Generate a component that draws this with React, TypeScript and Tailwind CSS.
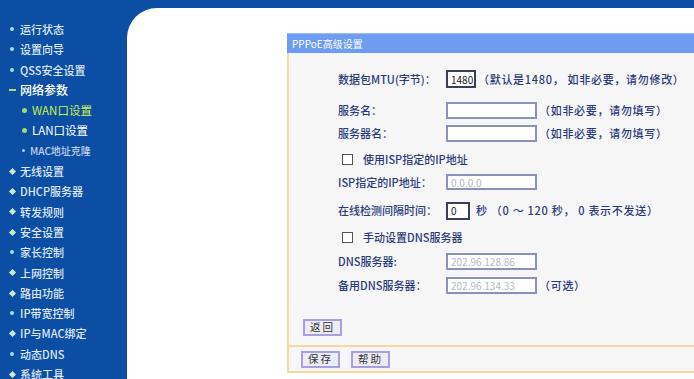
import React from "react";

type MenuItem = { label: string; kind: "dot" | "plus" | "open" | "sub"; active?: boolean; dim?: boolean };

const menu: MenuItem[] = [
  { label: "运行状态", kind: "dot" },
  { label: "设置向导", kind: "dot" },
  { label: "QSS安全设置", kind: "dot" },
  { label: "网络参数", kind: "open" },
  { label: "WAN口设置", kind: "sub", active: true },
  { label: "LAN口设置", kind: "sub" },
  { label: "MAC地址克隆", kind: "sub", dim: true },
  { label: "无线设置", kind: "plus" },
  { label: "DHCP服务器", kind: "plus" },
  { label: "转发规则", kind: "plus" },
  { label: "安全设置", kind: "plus" },
  { label: "家长控制", kind: "dot" },
  { label: "上网控制", kind: "plus" },
  { label: "路由功能", kind: "plus" },
  { label: "IP带宽控制", kind: "dot" },
  { label: "IP与MAC绑定", kind: "plus" },
  { label: "动态DNS", kind: "dot" },
  { label: "系统工具", kind: "plus" },
];

const font = { fontFamily: '"Noto Sans CJK SC", "Liberation Sans", sans-serif' };

function Sidebar() {
  return (
    <div className="flex w-[127px] shrink-0 flex-col pt-[19px] text-[11px] leading-[20.3px]">
      {menu.map((m) => {
        if (m.kind === "open") {
          return (
            <div key={m.label} className="flex h-[20.3px] items-center pl-[9px]">
              <span className="mr-[4px] h-[2px] w-[7px] bg-[#a6e07a]" />
              <span className="text-[12px] font-medium text-white">{m.label}</span>
            </div>
          );
        }
        if (m.kind === "sub") {
          return (
            <div key={m.label} className="flex h-[20.3px] items-center pl-[22px]">
              <span
                className={`mr-[5px] rounded-full ${m.dim ? "h-[3px] w-[3px] bg-[#b9c9e6]" : "h-[5px] w-[5px] bg-[#9fdc6a]"}`}
              />
              <span
                className={
                  m.active
                    ? "text-[11.5px] text-[#c9f24e]"
                    : m.dim
                    ? "text-[10px] font-medium text-[#c3d0ea]"
                    : "text-[11.5px] text-white"
                }
              >
                {m.label}
              </span>
            </div>
          );
        }
        return (
          <div key={m.label} className="flex h-[20.3px] items-center pl-[10px]">
            {m.kind === "dot" ? (
              <span className="mr-[6px] h-[4px] w-[4px] rounded-full bg-[#a9e0e0]" />
            ) : (
              <span className="mr-[5px] h-[5px] w-[5px] rotate-45 bg-[#c8eccd]" />
            )}
            <span className="font-medium text-[#dfe7f5]">{m.label}</span>
          </div>
        );
      })}
    </div>
  );
}

function Input({ w, value, strong, h = 17 }: { w: number; value?: string; strong?: boolean; h?: number }) {
  return (
    <div
      className={`flex items-center bg-white px-[3px] text-[10px] ${
        strong ? "border-2 border-[#3a3f55] text-[#222]" : "border-2 border-[#8a93b5] text-[#b4b8c4]"
      }`}
      style={{ width: w, height: h }}
    >
      {value}
    </div>
  );
}

function Checkbox() {
  return <span className="mr-[10px] ml-[4px] h-[11px] w-[11px] border border-[#555] bg-white" />;
}

function Btn({ label }: { label: string }) {
  return (
    <div className="flex h-[17px] w-[39px] items-center justify-center border-2 border-[#a79fe0] bg-[#ececf6] text-[10.5px] tracking-[2px] text-[#333]">
      {label}
    </div>
  );
}

function Hint({ children, ml = 2 }: { children: React.ReactNode; ml?: number }) {
  return (
    <span className="text-[11px] font-medium tracking-[0.7px] text-[#2a3a7a]" style={{ marginLeft: ml }}>
      {children}
    </span>
  );
}

function Row({ label, children, mt }: { label: string; children: React.ReactNode; mt: number }) {
  return (
    <div className="flex items-center" style={{ marginTop: mt }}>
      <div className="w-[108px] text-[11px] font-medium text-[#2a3a7a]">{label}</div>
      {children}
    </div>
  );
}

export default function App() {
  return (
    <div className="flex h-[379px] w-[694px] overflow-hidden bg-[#0b4ea3]" style={font}>
      <Sidebar />
      <div className="flex flex-1 flex-col pt-[8px]">
        <div className="flex-1 rounded-tl-[30px] bg-white pl-[160px] pt-[25px]">
          <div className="flex h-[20px] items-center border-t border-[#9bbcf6] bg-[#6e9cf1] pl-[5px] text-[10px] text-white">
            PPPoE高级设置
          </div>
          <div className="flex h-[292px] flex-col border-l-2 border-[#f4d8a2] bg-[#f6f6f6] pl-[49px] text-[#2a3a7a]">
            <Row label="数据包MTU(字节)：" mt={17}>
              <Input w={30} h={18} value="1480" strong />
              <Hint>（默认是1480， 如非必要，请勿修改）</Hint>
            </Row>
            <Row label="服务名：" mt={14}>
              <Input w={91} />
              <Hint>（如非必要，请勿填写）</Hint>
            </Row>
            <Row label="服务器名：" mt={6}>
              <Input w={91} />
              <Hint>（如非必要，请勿填写）</Hint>
            </Row>
            <div className="flex h-[16px] items-center text-[11px] font-medium" style={{ marginTop: 9 }}>
              <Checkbox />
              使用ISP指定的IP地址
            </div>
            <Row label="ISP指定的IP地址：" mt={7}>
              <Input w={91} h={16} value="0.0.0.0" />
            </Row>
            <Row label="在线检测间隔时间：" mt={11}>
              <Input w={24} h={18} value="0" strong />
              <Hint ml={6}>秒 （0 ～ 120 秒， 0 表示不发送）</Hint>
            </Row>
            <div className="flex h-[16px] items-center text-[11px] font-medium" style={{ marginTop: 10 }}>
              <Checkbox />
              手动设置DNS服务器
            </div>
            <Row label="DNS服务器:" mt={7}>
              <Input w={91} value="202.96.128.86" />
            </Row>
            <Row label="备用DNS服务器：" mt={7}>
              <Input w={91} value="202.96.134.33" />
              <Hint>（可选）</Hint>
            </Row>
            <div className="-ml-[35px]" style={{ marginTop: 25 }}>
              <Btn label="返回" />
            </div>
          </div>
          <div className="flex h-[28px] items-center gap-[11px] border-y-2 border-l-2 border-[#f4d8a2] bg-[#f6f6f6] pl-[12px]">
            <Btn label="保存" />
            <Btn label="帮助" />
          </div>
        </div>
      </div>
    </div>
  );
}
